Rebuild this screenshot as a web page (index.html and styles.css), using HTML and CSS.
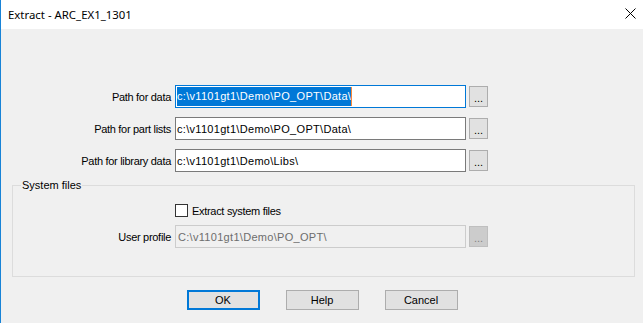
FILE: index.html
```html
<!DOCTYPE html>
<html>
<head>
  <meta charset="utf-8">
  <title>Extract - ARC_EX1_1301</title>
  <link rel="stylesheet" href="styles.css">
</head>
<body>
  <div class="window">
    <div class="titlebar">
      <span class="title">Extract - ARC_EX1_1301</span>
      <svg class="close" width="11" height="11" viewBox="0 0 11 11">
        <path d="M0.5 0.5 L10.5 10.5 M10.5 0.5 L0.5 10.5" stroke="#000" stroke-width="1" fill="none"/>
      </svg>
    </div>
    <div class="client">
      <div class="paths">
        <label class="lbl">Path for data</label>
        <div class="field focus"><span class="sel">c:\v1101gt1\Demo\PO_OPT\Data\</span><span class="caret"></span></div>
        <div class="dots">...</div>

        <label class="lbl">Path for part lists</label>
        <div class="field">c:\v1101gt1\Demo\PO_OPT\Data\</div>
        <div class="dots">...</div>

        <label class="lbl">Path for library data</label>
        <div class="field">c:\v1101gt1\Demo\Libs\</div>
        <div class="dots">...</div>
      </div>

      <fieldset class="group">
        <legend>System files</legend>
        <div class="sys">
          <label class="check"><span class="box"></span>Extract system files</label>
          <label class="lbl profile-lbl">User profile</label>
          <div class="field disabled profile-field">C:\v1101gt1\Demo\PO_OPT\</div>
          <div class="dots disabled profile-btn">...</div>
        </div>
      </fieldset>

      <div class="actions">
        <div class="btn default">OK</div>
        <div class="btn">Help</div>
        <div class="btn">Cancel</div>
      </div>
    </div>
  </div>
</body>
</html>
```

FILE: styles.css
```css
* {box-sizing:border-box;}
body, html {
  margin:0;padding:0;
  background:#f0f0f0;
}
.window {
  width:643px;
  height:323px;
  border-left:1px solid #1883d7;
  display:flex;
  flex-direction:column;
  font-family:"Liberation Sans", Arial, sans-serif;
  font-size:11px;
  color:#000;
}
.titlebar {
  height:29px;
  background:#fff;
  display:flex;
  align-items:center;
  padding-left:7px;
  position:relative;
}
.title {
  font-family:"Noto Sans", sans-serif;
  font-size:11.4px;
  color:#000;
}
.close {
  position:absolute;
  left:624px;
  top:8px;
}
.client {
  flex:1;
  background:#f0f0f0;
  padding-top:56px;
}
.paths {
  display:grid;
  grid-template-columns:171px 291px 19px;
  column-gap:3px;
  row-gap:9px;
  align-items:center;
}
.lbl {
  text-align:right;
  white-space:nowrap;
  padding-right:1px;
  letter-spacing:-0.3px;
}
.field {
  height:23px;
  border:1px solid #7a7a7a;
  background:#fff;
  padding:1px 1px;
  display:flex;
  align-items:center;
  white-space:nowrap;
  overflow:hidden;
  letter-spacing:0.3px;
}
.field.focus {
  border-color:#0078d7;
}
.sel {
  background:#0078d7;
  color:#fff;
  line-height:19px;
  height:19px;
}
.caret {
  width:1px;
  height:19px;
  background:#f7883a;
}
.field.disabled {
  border-color:#cccccc;
  background:#f0f0f0;
  color:#6d6d6d;
  padding-left:2px;
}
.dots {
  height:21px;
  background:#e1e1e1;
  border:1px solid #adadad;
  text-align:center;
  line-height:22px;
}
.dots.disabled {
  background:#cccccc;
  border-color:#bfbfbf;
  color:#838383;
}
.group {
  margin:7px 8px 0 11px;
  padding:12px 0 28px 8px;
  border:1px solid #dcdcdc;
  min-width:0;
}
.group legend {
  padding:0 1px;
  line-height:13px;
}
.sys {
  display:grid;
  grid-template-columns:151px 291px 19px;
  grid-template-rows:13px 23px;
  column-gap:3px;
  row-gap:8px;
  align-items:center;
}
.check {
  grid-column:2 / 4;
  grid-row:1;
  display:flex;
  align-items:center;
  gap:4px;
  height:13px;
  letter-spacing:-0.3px;
}
.profile-lbl {grid-column:1; grid-row:2;}
.profile-field {grid-column:2; grid-row:2;}
.profile-btn {grid-column:3; grid-row:2;}
.box {
  width:13px;
  height:13px;
  border:1px solid #333;
  background:#fff;
}
.actions {
  display:flex;
  justify-content:center;
  gap:26px;
  margin-top:13px;
}
.btn {
  width:73px;
  height:20px;
  background:#e1e1e1;
  border:1px solid #adadad;
  text-align:center;
  line-height:18px;
}
.btn.default {
  border:2px solid #0078d7;
  line-height:16px;
}
```
